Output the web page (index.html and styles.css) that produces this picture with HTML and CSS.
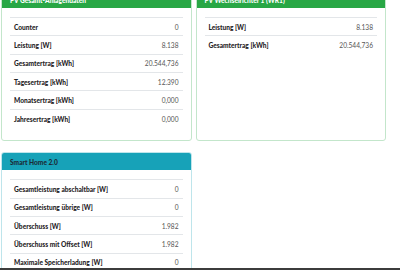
FILE: index.html
```html
<!DOCTYPE html>
<html lang="de">
<head>
  <meta charset="UTF-8" />
  <title>Anlagen Übersicht</title>
  <link rel="stylesheet" href="styles.css">
</head>
<body>
  <div class="grid">
    <div class="card card-success">
      <div class="card-header">PV Gesamt-Anlagendaten</div>
      <div class="card-body">
        <table>
          <tr><th>Counter</th><td>0</td></tr>
          <tr><th>Leistung [W]</th><td>8.138</td></tr>
          <tr><th>Gesamtertrag [kWh]</th><td>20.544,736</td></tr>
          <tr><th>Tagesertrag [kWh]</th><td>12.390</td></tr>
          <tr><th>Monatsertrag [kWh]</th><td>0,000</td></tr>
          <tr><th>Jahresertrag [kWh]</th><td>0,000</td></tr>
        </table>
      </div>
    </div>

    <div class="card card-success">
      <div class="card-header">PV Wechselrichter 1 (WR1)</div>
      <div class="card-body">
        <table>
          <tr><th>Leistung [W]</th><td>8.138</td></tr>
          <tr><th>Gesamtertrag [kWh]</th><td>20.544,736</td></tr>
        </table>
      </div>
    </div>

    <div class="card card-info">
      <div class="card-header">Smart Home 2.0</div>
      <div class="card-body">
        <table>
          <tr><th>Gesamtleistung abschaltbar [W]</th><td>0</td></tr>
          <tr><th>Gesamtleistung übrige [W]</th><td>0</td></tr>
          <tr><th>Überschuss [W]</th><td>1.982</td></tr>
          <tr><th>Überschuss mit Offset [W]</th><td>1.982</td></tr>
          <tr><th>Maximale Speicherladung [W]</th><td>0</td></tr>
          <tr><th>Speicherentladung [W]</th><td>0</td></tr>
        </table>
      </div>
    </div>
  </div>

  <div class="footer-bar"></div>
</body>
</html>
```

FILE: styles.css
```css
* {
  box-sizing: border-box;
}

html, body {
  margin: 0;
  background: #ffffff;
  font-family: Lato, 'Noto Sans', sans-serif;
  font-size: 6.6px;
  color: #1f2326;
}

body {
  padding: 0 1px;
}

.grid {
  width: 385px;
  margin-top: -10px;
  display: grid;
  grid-template-columns: 1fr 1fr;
  column-gap: 4px;
  row-gap: 11px;
}

.card {
  border: 1px solid #c3e6cb;
  border-radius: 3px;
  background: #fff;
  overflow: hidden;
}

.card-header {
  height: 17px;
  padding: 0 8px;
  display: flex;
  align-items: center;
  font-weight: 900;
  font-size: 6.6px;
}

.card-success .card-header {
  background: #28a745;
  color: #fff;
}

.card-info {
  border-color: #bee5eb;
}

.card-info .card-header {
  background: #17a2b8;
  color: #1c2b36;
}

.card-body {
  padding: 9px 8px 13px;
}

table {
  width: 100%;
  border-collapse: collapse;
}

th, td {
  height: 18.33px;
  padding: 0 4px;
  border-top: 1px solid #e3e6e9;
  vertical-align: middle;
}

th {
  text-align: left;
  font-weight: 900;
}

td {
  text-align: right;
  font-weight: 400;
  color: #555;
}

.footer-bar {
  position: fixed;
  left: 0;
  right: 0;
  bottom: 0;
  height: 2px;
  background: #3c3c3c;
}
```
